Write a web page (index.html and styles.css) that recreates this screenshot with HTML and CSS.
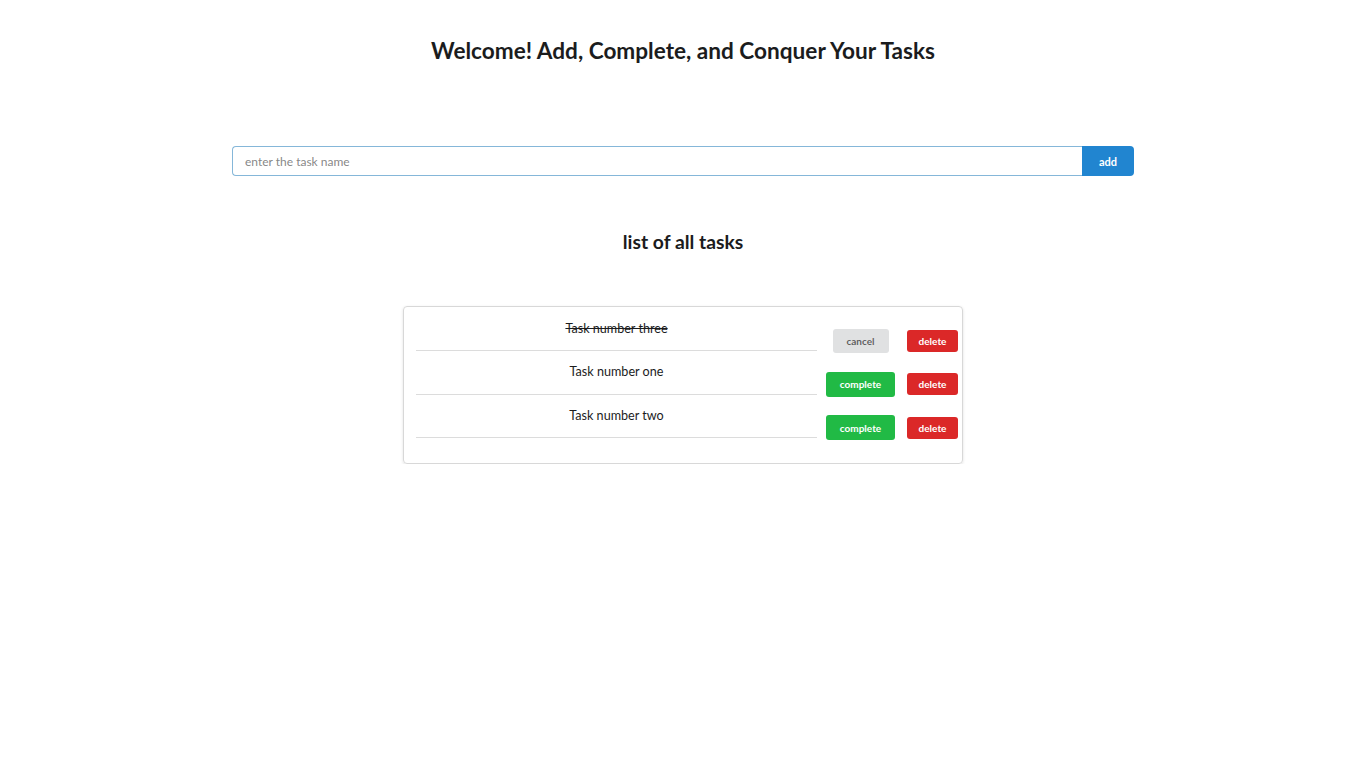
FILE: index.html
```html
<!DOCTYPE html>
<html lang="en">
<head>
<meta charset="utf-8">
<title>Tasks</title>
<link rel="stylesheet" href="styles.css">
</head>
<body>
<main class="page">
  <h1 class="title">Welcome! Add, Complete, and Conquer Your Tasks</h1>
  <form class="add-form">
    <input class="task-input" type="text" placeholder="enter the task name">
    <button class="add-btn" type="button">add</button>
  </form>
  <h2 class="subtitle">list of all tasks</h2>
  <section class="card">
    <div class="row">
      <div class="task-name done">Task number three</div>
      <div class="actions">
        <div class="action-col"><button class="btn btn-cancel" type="button">cancel</button></div>
        <button class="btn btn-delete" type="button">delete</button>
      </div>
    </div>
    <div class="row">
      <div class="task-name">Task number one</div>
      <div class="actions">
        <div class="action-col"><button class="btn btn-complete" type="button">complete</button></div>
        <button class="btn btn-delete" type="button">delete</button>
      </div>
    </div>
    <div class="row">
      <div class="task-name">Task number two</div>
      <div class="actions">
        <div class="action-col"><button class="btn btn-complete" type="button">complete</button></div>
        <button class="btn btn-delete" type="button">delete</button>
      </div>
    </div>
  </section>
</main>
</body>
</html>
```

FILE: styles.css
```css
* { box-sizing: border-box; }

html, body {
  margin: 0;
  padding: 0;
  background: #ffffff;
}

body {
  font-family: Lato, "Open Sans", sans-serif;
  color: rgba(0, 0, 0, 0.87);
  font-size: 14px;
}

.page {
  display: flex;
  flex-direction: column;
  align-items: center;
}

.title {
  margin: 38px 0 0;
  font-size: 22.6px;
  line-height: 26px;
  font-weight: 700;
  color: #1b1c1d;
}

.add-form {
  display: flex;
  width: 902px;
  height: 30px;
  margin-top: 82px;
}

.task-input {
  flex: 1;
  height: 30px;
  border: 1px solid #85b7d9;
  border-right: none;
  border-radius: 4px 0 0 4px;
  padding: 0 12px;
  font-family: Lato, sans-serif;
  font-size: 12px;
  color: rgba(0, 0, 0, 0.8);
  outline: none;
}

.task-input::placeholder {
  color: rgba(115, 115, 115, 0.87);
}

.add-btn {
  width: 52px;
  height: 30px;
  border: none;
  border-radius: 0 4px 4px 0;
  background: #2185d0;
  color: #ffffff;
  font-family: Lato, sans-serif;
  font-weight: 700;
  font-size: 11px;
  padding: 0;
}

.subtitle {
  margin: 55px 0 0;
  font-size: 19.3px;
  line-height: 22px;
  font-weight: 700;
  color: #1b1c1d;
}

.card {
  margin-top: 53px;
  width: 560px;
  border: 1px solid #d8d8d8;
  border-radius: 4px;
  box-shadow: 0 1px 3px rgba(0, 0, 0, 0.12);
  padding: 1px 4px 25px 12px;
  display: flex;
  flex-direction: column;
}

.row {
  display: flex;
  align-items: stretch;
}

.task-name {
  width: 401px;
  height: 43.4px;
  padding-top: 13px;
  border-bottom: 1px solid #dcdcdc;
  text-align: center;
  font-size: 12.6px;
  line-height: 16px;
  color: #1b1c1d;
}

.task-name.done {
  text-decoration: line-through;
}

.actions {
  display: flex;
  align-items: center;
  align-self: flex-end;
  margin-bottom: -2px;
  height: 25px;
}

.action-col {
  width: 69px;
  margin-left: 9px;
  display: flex;
  justify-content: center;
}

.btn {
  border: none;
  border-radius: 3px;
  font-family: Lato, sans-serif;
  font-weight: 700;
  font-size: 10px;
  padding: 0;
  line-height: 1;
}

.btn-cancel {
  width: 56px;
  height: 24px;
  background: #e0e1e2;
  color: rgba(0, 0, 0, 0.6);
}

.btn-complete {
  width: 69px;
  height: 25px;
  background: #21ba45;
  color: #ffffff;
}

.btn-delete {
  width: 51px;
  height: 22px;
  margin-left: 12px;
  background: #db2828;
  color: #ffffff;
}
```
